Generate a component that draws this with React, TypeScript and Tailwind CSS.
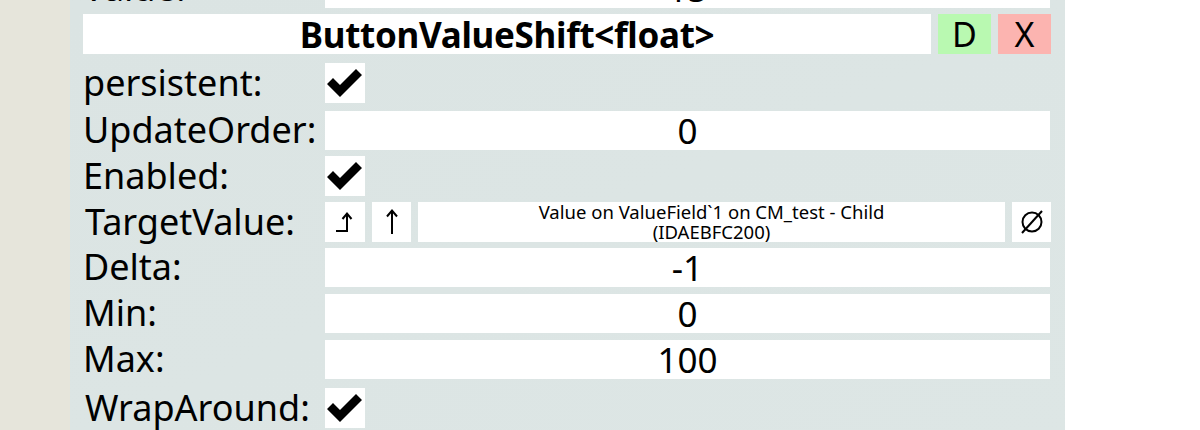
import React from "react";

const font = { fontFamily: '"Noto Sans", "Open Sans", sans-serif' };

function Check() {
  return (
    <div className="w-[40px] h-[40px] bg-white flex items-center justify-center">
      <svg width="38" height="32" viewBox="0 0 38 32">
        <polygon points="1,17 7,11 14,18 30,2 36,8 14,30" fill="#000" />
      </svg>
    </div>
  );
}

function Label({ children, cls = "" }: { children: React.ReactNode; cls?: string }) {
  return (
    <div className={`w-[242px] shrink-0 text-[36px] leading-[40px] text-black whitespace-nowrap ${cls}`}>{children}</div>
  );
}

function Field({ children }: { children: React.ReactNode }) {
  return (
    <div className="w-[725px] h-[39px] bg-white flex items-center justify-center text-[35px] leading-none text-black">
      {children}
    </div>
  );
}

export default function App() {
  return (
    <div className="flex w-[1200px] h-[430px] overflow-hidden bg-white" style={font}>
      <div className="w-[70px] shrink-0 bg-[#e6e5db]" />
      <div className="w-[995px] shrink-0 bg-gradient-to-br from-[#dbe4e3] to-[#dde6e5] pl-[13px] flex flex-col">
        {/* partial top row */}
        <div className="flex items-center h-[40px] mt-[-32px]">
          <Label>Value:</Label>
          <Field>15</Field>
        </div>
        {/* header */}
        <div className="flex items-stretch h-[40px] mt-[6px]">
          <div className="w-[848px] bg-white flex items-center justify-center text-[35px] font-bold leading-none text-black tracking-[-0.3px]">
            ButtonValueShift&lt;float&gt;
          </div>
          <div className="w-[53px] ml-[7px] bg-[#b9f9b1] flex items-center justify-center text-[34px] leading-none">D</div>
          <div className="w-[53px] ml-[7px] bg-[#fcb4b0] flex items-center justify-center text-[34px] leading-none">X</div>
        </div>
        <div className="flex items-center h-[40px] mt-[9px]">
          <Label>persistent:</Label>
          <Check />
        </div>
        <div className="flex items-center h-[40px] mt-[7px]">
          <Label>UpdateOrder:</Label>
          <Field>0</Field>
        </div>
        <div className="flex items-center h-[40px] mt-[6px]">
          <Label>Enabled:</Label>
          <Check />
        </div>
        <div className="flex items-center h-[40px] mt-[6px]">
          <Label cls="pl-[2px]">TargetValue:</Label>
          <div className="flex h-[40px] gap-[7px]">
            <div className="w-[40px] bg-white flex items-center justify-center">
              <svg width="22" height="26" viewBox="0 0 22 26" fill="none" stroke="#000" strokeWidth="2">
                <path d="M2 22 H13 V5" />
                <path d="M8.5 10 L13 4.5 L17.5 10" />
              </svg>
            </div>
            <div className="w-[39px] bg-white flex items-center justify-center">
              <svg width="16" height="28" viewBox="0 0 16 28" fill="none" stroke="#000" strokeWidth="2">
                <path d="M8 26 V3" />
                <path d="M3 8.5 L8 2.5 L13 8.5" />
              </svg>
            </div>
            <div className="w-[587px] bg-white flex flex-col items-center justify-start text-[18.5px] leading-[20px] text-black">
              <div>Value on ValueField`1 on CM_test - Child</div>
              <div>(IDAEBFC200)</div>
            </div>
            <div className="w-[39px] bg-white flex items-center justify-center">
              <svg width="28" height="28" viewBox="0 0 28 28" fill="none" stroke="#000" strokeWidth="2">
                <circle cx="14" cy="14" r="9.5" />
                <path d="M4 25 L24 3" />
              </svg>
            </div>
          </div>
        </div>
        <div className="flex items-center h-[40px] mt-[5px]">
          <Label>Delta:</Label>
          <Field>-1</Field>
        </div>
        <div className="flex items-center h-[40px] mt-[6px]">
          <Label>Min:</Label>
          <Field>0</Field>
        </div>
        <div className="flex items-center h-[40px] mt-[6px]">
          <Label>Max:</Label>
          <Field>100</Field>
        </div>
        <div className="flex items-center h-[40px] mt-[9px]">
          <Label cls="pl-[2px]">WrapAround:</Label>
          <Check />
        </div>
      </div>
      <div className="flex-1 bg-white" />
    </div>
  );
}
